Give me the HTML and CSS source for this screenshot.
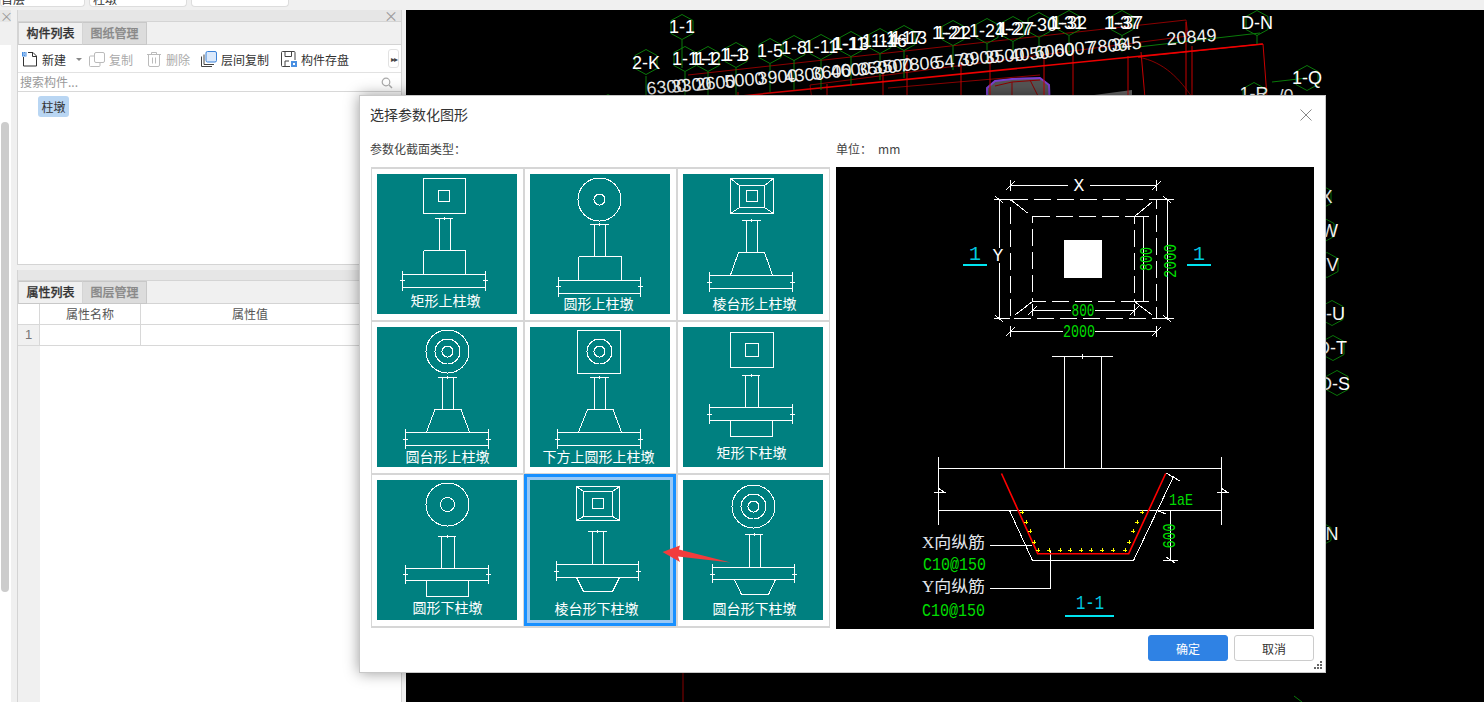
FILE: index.html
```html
<!DOCTYPE html>
<html lang="zh">
<head>
<meta charset="utf-8">
<title>选择参数化图形</title>
<link rel="stylesheet" href="styles.css">
</head>
<body>
<div class="topbar">
  <div class="pill pill-first"><span>首层</span></div>
  <div class="pill"><span>柱墩</span></div>
  <div class="pill"></div>
</div>
<div class="workspace">
  <aside class="side">
    <div class="mini">
      <div class="mini-head">×</div>
      <div class="mini-tabs"></div>
      <div class="mini-body"><div class="thumb"></div></div>
    </div>
    <div class="stack">
      <section class="panel panel-top">
        <div class="panel-head"><span class="x">×</span></div>
        <div class="tabs"><div class="tab on">构件列表</div><div class="tab">图纸管理</div></div>
        <div class="toolbar">
          <span class="tool tool-new">
            <svg class="ico" viewBox="0 0 16 16"><path d="M1.5 6v9h13V5L11 1.5H6" fill="none" stroke="#333"/><path d="M10.5 1.5V5.5H14.5" fill="none" stroke="#333"/><rect x="0" y="1" width="4.5" height="4.5" fill="#4a90e2"/><path d="M1 2h1M3 2h1M2 3h1M1 4h1M3 4h1" stroke="#cfe3fa"/></svg>
            <span>新建</span><i class="caret"></i>
          </span>
          <span class="tool off tool-copy">
            <svg class="ico" viewBox="0 0 16 16"><rect x="5.5" y="1.5" width="10" height="10" rx="1.5" fill="none" stroke="#bbb"/><path d="M5 5H1.5a1 1 0 0 0-1 1v8.5a1 1 0 0 0 1 1H10a1 1 0 0 0 1-1V12" fill="none" stroke="#bbb"/></svg>
            <span>复制</span>
          </span>
          <span class="tool off tool-del">
            <svg class="ico" viewBox="0 0 16 16"><path d="M1 3.500H15M5.500 3.500V1.500H10.500V3.500M2.500 3.500V14a1.500 1.500 0 0 0 1.500 1.500H12a1.500 1.500 0 0 0 1.500-1.500V3.500M6.500 6.500V12.500M9.500 6.500V12.500" fill="none" stroke="#bbb"/></svg>
            <span>删除</span>
          </span>
          <span class="tool tool-floor">
            <svg class="ico" viewBox="0 0 16 16"><path d="M3 3.500V13.500H13M.5 5.500V15.500H11" fill="none" stroke="#444"/><rect x="5" y=".5" width="10.500" height="10.500" rx="1.500" fill="#dbe9fb" stroke="#3b82d8"/></svg>
            <span>层间复制</span>
          </span>
          <span class="tool tool-save">
            <svg class="ico" viewBox="0 0 16 16"><path d="M9 15.500H1.500a1 1 0 0 1-1-1V1.500a1 1 0 0 1 1-1h11.500a1 1 0 0 1 1 1V9M4 .5V5.500H10.500V.5M4 15.500V10H8" fill="none" stroke="#444"/><rect x="10" y="10" width="6" height="6" fill="#4a90e2"/><rect x="12" y="12" width="2" height="2" fill="#fff"/></svg>
            <span>构件存盘</span>
          </span>
          <span class="more">▸▸</span>
        </div>
        <div class="search"><span>搜索构件...</span>
          <svg class="lens" viewBox="0 0 12 12"><circle cx="5" cy="5" r="3.800" fill="none" stroke="#aaa" stroke-width="1.200"/><path d="M8 8L11 11" stroke="#aaa" stroke-width="1.400"/></svg>
        </div>
        <div class="list"><span class="chip">柱墩</span></div>
      </section>
      <section class="panel panel-bottom">
        <div class="panel-head"></div>
        <div class="tabs"><div class="tab on">属性列表</div><div class="tab">图层管理</div></div>
        <div class="table">
          <div class="tr tr-head"><div class="td num head-num"></div><div class="td name">属性名称</div><div class="td val">属性值</div></div>
          <div class="tr"><div class="td num">1</div><div class="td name"></div><div class="td val"></div></div>
          <div class="tfill"><div class="fill-num"></div></div>
        </div>
      </section>
    </div>
  </aside>

  <main class="canvas">
    <svg class="cad-canvas" viewBox="406 10 1078 692">
      <defs><polygon id="h" points="0,-12.500 11,-6.500 11,6.500 0,12.500 -11,6.500 -11,-6.500"/></defs>
      <polygon class="g-fill" points="1079,97 1132,90 1132,110 1079,110"/>
      <polygon class="p-fill" points="987,88 995,81 1012,79 1040,78 1049,85 1050,110 987,110"/>
      <path class="r1" d="M888 88L1040 75M1030 80L1040 100M995 86L1012 82L1040 80M1012 82V100M688 75L1186 20L1188 36L810 85M810 85L812 100M1138 57C1165 62 1180 80 1192 97"/>
      <path class="r2" d="M738 92V110M827 84V110M883 72V110M907 55V110M961 62V110M990 60V110M1044 56V110M1073 52V110M1128 56V110M1141 52L1146 110M1186 22V110M1192 46V110M1263 44L1268 110M1138 57L1262 44"/>
      <path class="r3" d="M690 101L1263 44"/>
      <path class="gl" d="M1138 47L1260 33M1257 35V44M682 40V68M685 72V100M708 72V100M736 68V96M770 64V92M794 60V90M821 60V90M851 56V86M880 54V80M904 50V78M953 46V70M987 44V64M1013 42V60M1039 38V58M1069 36V56M1122 36V52M1307 78L1272 82M646 76V100M1294 696L1302 702"/>
      <path class="r1" d="M683 672V702"/>
      <g class="hexes">
        <use href="#h" x="682" y="27"/><use href="#h" x="646" y="62"/><use href="#h" x="685" y="59"/><use href="#h" x="708" y="59"/><use href="#h" x="736" y="55"/><use href="#h" x="770" y="51"/><use href="#h" x="794" y="48"/><use href="#h" x="821" y="47"/><use href="#h" x="851" y="44"/><use href="#h" x="880" y="41"/><use href="#h" x="904" y="38"/><use href="#h" x="953" y="33"/><use href="#h" x="987" y="31"/><use href="#h" x="1013" y="29"/><use href="#h" x="1039" y="25"/><use href="#h" x="1069" y="23"/><use href="#h" x="1122" y="23"/><use href="#h" x="1257" y="23"/><use href="#h" x="1307" y="78"/><use href="#h" x="1254" y="95"/><use href="#h" x="608" y="107"/>
        <use href="#h" x="1320" y="197"/><use href="#h" x="1323" y="230"/><use href="#h" x="1327" y="265"/><use href="#h" x="1332" y="313"/><use href="#h" x="1333" y="348"/><use href="#h" x="1337" y="383"/><use href="#h" x="1320" y="534"/>
      </g>
      <g class="lb">
        <text x="682" y="33">1-1</text><text x="646" y="69">2-K</text><text x="685" y="65">1-1</text><text x="708" y="65">1-2</text><text x="704" y="65">1-1</text><text x="736" y="61">1-3</text><text x="733" y="61">1-1</text><text x="770" y="57">1-5</text><text x="794" y="54">1-8</text><text x="821" y="53">1-11</text><text x="851" y="50">1-13</text><text x="849" y="50">1-11</text><text x="880" y="47">1-14</text><text x="889" y="47">1-16</text><text x="904" y="44">1-17</text><text x="909" y="44">1-13</text><text x="953" y="39">1-22</text><text x="950" y="39">1-21</text><text x="987" y="37">1-24</text><text x="1013" y="35">1-27</text><text x="1016" y="35">1-27</text><text x="1044" y="31">-30</text><text x="1069" y="29">1-32</text><text x="1066" y="29">1-31</text><text x="1122" y="29">1-37</text><text x="1125" y="29">1-37</text><text x="1257" y="29">D-N</text><text x="1307" y="84">1-Q</text><text x="1254" y="100">1-R</text><text x="1286" y="102">/0</text>
        <text x="1317" y="203">D-X</text><text x="1320" y="237">D-W</text><text x="1323" y="271">D-V</text><text x="1329" y="320">D-U</text><text x="1332" y="354">D-T</text><text x="1334.500" y="390">D-S</text><text x="1332" y="540">N</text>
      </g>
      <g class="lb nums">
        <text x="667" y="93" transform="rotate(-5 667 93)">6300</text><text x="692" y="91" transform="rotate(-5 692 91)">3300</text><text x="716" y="89" transform="rotate(-5 716 89)">2600</text><text x="745" y="86" transform="rotate(-5 745 86)">5000</text><text x="778" y="83" transform="rotate(-5 778 83)">3900</text><text x="805" y="81" transform="rotate(-5 805 81)">4300</text><text x="832" y="78" transform="rotate(-5 832 78)">3600</text><text x="851" y="76" transform="rotate(-5 851 76)">4600</text><text x="878" y="74" transform="rotate(-5 878 74)">3500</text><text x="893" y="72" transform="rotate(-5 893 72)">3500</text><text x="920" y="70" transform="rotate(-5 920 70)">7806</text><text x="955" y="67" transform="rotate(-5 955 67)">5470</text><text x="980" y="64" transform="rotate(-5 980 64)">3900</text><text x="1005" y="62" transform="rotate(-5 1005 62)">3500</text><text x="1030" y="60" transform="rotate(-5 1030 60)">4050</text><text x="1055" y="57" transform="rotate(-5 1055 57)">6000</text><text x="1075" y="55" transform="rotate(-5 1075 55)">6007</text><text x="1108" y="52" transform="rotate(-5 1108 52)">7806</text><text x="1127" y="50" transform="rotate(-5 1127 50)">345</text><text x="1192" y="43" transform="rotate(-5 1192 43)">20849</text>
      </g>
    </svg>
  </main>
</div>

<div class="dialog">
  <header class="dlg-title"><span>选择参数化图形</span>
    <svg class="close" viewBox="0 0 12 12"><path d="M.5 .5L11.500 11.500M11.500 .5L.5 11.500" stroke="#888" fill="none"/></svg>
  </header>
  <div class="dlg-labels"><span class="lab-left">参数化截面类型&#xFF1A;</span><span class="lab-right">单位&#xFF1A;<em>mm</em></span></div>
  <div class="dlg-body">
    <div class="grid">
      <div class="cell"><svg class="tile" viewBox="0 0 140 140"><path class="ln" d="M46.500 4.500H88.500V39.500H46.500ZM61.500 16.500H72.500V27.500H61.500ZM58 44.500H76M62.500 44.500V76.500M73.500 44.500V76.500M67.500 43V46M46.500 76.500H88.500V100.500M46.500 76.500V100.500M25.500 100.500H108.500M25.500 113.500H108.500M25.500 97V117M108.500 97V117M23 106.500H28M106 106.500H111"/><text class="cap" x="68.500" y="132">矩形上柱墩</text></svg></div>
      <div class="cell"><svg class="tile" viewBox="0 0 140 140"><circle class="ln" cx="69.500" cy="25.500" r="21.500"/><circle class="ln" cx="69.500" cy="25.500" r="5.500"/><path class="ln" d="M60 50.500H79M64.500 50.500V82.500M75.500 50.500V82.500M69.500 49V52M48.500 82.500H91.500V106.500M48.500 82.500V106.500M28.500 106.500H110.500M28.500 119.500H110.500M28.500 103V123M110.500 103V123M26 112.500H31M108 112.500H113"/><text class="cap" x="68.500" y="134.500">圆形上柱墩</text></svg></div>
      <div class="cell"><svg class="tile" viewBox="0 0 140 140"><path class="ln" d="M47.500 4.500H90.500V39.500H47.500ZM56.500 11.500H81.500V33.500H56.500ZM63.500 16.500H74.500V27.500H63.500ZM47.500 4.500L56.500 11.500M90.500 4.500L81.500 11.500M47.500 39.500L56.500 33.500M90.500 39.500L81.500 33.500M59 46.500H78M63.500 46.500V78.500M74.500 46.500V78.500M68.500 45V48M55.500 78.500H81.500L89.500 101M55.500 78.500L47.500 101M26.500 101.500H109.500M26.500 114.500H109.500M26.500 98V118M109.500 98V118M24 108.500H29M107 108.500H112"/><text class="cap" x="71.500" y="135">棱台形上柱墩</text></svg></div>
      <div class="cell"><svg class="tile" viewBox="0 0 140 140"><circle class="ln" cx="70.500" cy="24.500" r="21.500"/><circle class="ln" cx="70.500" cy="24.500" r="12.500"/><circle class="ln" cx="70.500" cy="24.500" r="5.500"/><path class="ln" d="M61 50.500H80M65.500 50.500V82.500M76.500 50.500V82.500M70.500 49V52M58 82.500H84L92.500 105M58 82.500L49.500 105M28.500 105.500H111.500M28.500 118.500H111.500M28.500 102V122M111.500 102V122M26 112.500H31M109 112.500H114"/><text class="cap" x="70.500" y="135">圆台形上柱墩</text></svg></div>
      <div class="cell"><svg class="tile" viewBox="0 0 140 140"><path class="ln" d="M47.500 3.500H90.500V46.500H47.500ZM60 50.500H79M64.500 50.500V82.500M75.500 50.500V82.500M69.500 49V52M57.500 82.500H83L91.500 105M57.500 82.500L48.500 105M27.500 105.500H110.500M27.500 118.500H110.500M27.500 102V122M110.500 102V122M25 112.500H30M108 112.500H113"/><circle class="ln" cx="69.500" cy="24.500" r="12.500"/><circle class="ln" cx="69.500" cy="24.500" r="5.500"/><text class="cap" x="68.500" y="135">下方上圆形上柱墩</text></svg></div>
      <div class="cell"><svg class="tile" viewBox="0 0 140 140"><path class="ln" d="M47.500 5.500H90.500V40.500H47.500ZM62.500 16.500H75.500V29.500H62.500ZM59 48.500H77M62.500 48.500V80.500M75.500 48.500V80.500M68.500 47V50M26.500 80.500H109.500M26.500 93.500H109.500M26.500 77V97M109.500 77V97M24 87.500H29M107 87.500H112M47.500 93.500V109.500H89.500V93.500"/><text class="cap" x="68.500" y="131">矩形下柱墩</text></svg></div>
      <div class="cell"><svg class="tile" viewBox="0 0 140 140"><circle class="ln" cx="70.500" cy="24.500" r="21.500"/><circle class="ln" cx="70.500" cy="24.500" r="7"/><path class="ln" d="M61 56.500H79M64.500 56.500V88.500M77.500 56.500V88.500M70.500 55V58M28.500 88.500H111.500M28.500 100.500H111.500M28.500 85V104M111.500 85V104M26 94.500H31M109 94.500H114M49.500 100.500V116.500H91.500V100.500"/><text class="cap" x="70.500" y="133">圆形下柱墩</text></svg></div>
      <div class="cell"><svg class="tile sel" viewBox="0 0 140 140"><path class="ln" d="M46.500 6.500H89.500V40.500H46.500ZM53.500 11.500H82.500V36.500H53.500ZM62.500 18.500H73.500V28.500H62.500ZM46.500 6.500L53.500 11.500M89.500 6.500L82.500 11.500M46.500 40.500L53.500 36.500M89.500 40.500L82.500 36.500M58 51.500H77M62.500 51.500V84.500M73.500 51.500V84.500M67.500 50V53M26.500 84.500H108.500M26.500 97.500H108.500M26.500 81V101M108.500 81V101M24 91.500H29M106 91.500H111M46.500 97.500L53.500 111.500H82.500L89.500 97.500"/><text class="cap" x="66.500" y="133.500">棱台形下柱墩</text></svg></div>
      <div class="cell"><svg class="tile" viewBox="0 0 140 140"><circle class="ln" cx="70.500" cy="26.500" r="21.500"/><circle class="ln" cx="70.500" cy="26.500" r="12.500"/><circle class="ln" cx="70.500" cy="26.500" r="5.500"/><path class="ln" d="M62 54.500H80M66.500 54.500V87.500M77.500 54.500V87.500M71.500 53V56M29.500 87.500H111.500M29.500 99.500H111.500M29.500 84V103M111.500 84V103M27 94.500H32M109 94.500H114M51.500 99.500L58.500 114.500H85.500L92.500 99.500"/><text class="cap" x="71.500" y="134">圆台形下柱墩</text></svg></div>
    </div>
    <svg class="preview" viewBox="836 167 478 462">
      <g class="wl">
        <path d="M1010.500 185.500H1068M1090 185.500H1156.500M1010.500 180V191M1156.500 180V191M1006 190L1015 181M1152 190L1161 181"/>
        <rect class="dash" x="1010.500" y="199.500" width="146" height="119"/>
        <rect class="dash" x="1032.500" y="216.500" width="102" height="85"/>
        <path d="M1010.500 199.500L1027.500 213M1134.500 216.500L1152 202M1032.500 301.500L1015 315M1134.500 301.500L1152 315"/>
        <path d="M999.500 199.500V248M999.500 263V318.500M994 199.500H1010M994 318.500H1010M995 196L1003 203M995 315L1003 322"/>
        <path d="M1143.500 216.500V301.500M1134 216.500H1149M1134 301.500H1149"/>
        <path d="M1167.500 199.500V318.500M1157 199.500H1174M1157 318.500H1174M1163 196L1171 203M1163 315L1171 322"/>
        <path d="M1032.500 310.500H1071M1095 310.500H1134.500M1032.500 304V316M1134.500 304V316M1028 315L1037 306M1130 315L1139 306"/>
        <path d="M1010.500 331.500H1063M1095 331.500H1156.500M1010.500 326V337M1156.500 326V337M1006 336L1015 327M1152 336L1161 327"/>
        <path d="M1052 356.500H1113M1064.500 356.500V468.500M1101.500 356.500V468.500M1082 354V359"/>
        <path d="M938.500 457V525M1221.500 457V525M938.500 468.500H1221.500M938.500 510.500H1221.500M934 492H944L938 488M1217 492H1227L1221 488"/>
        <path d="M1009.500 510.500L1032.500 560.500H1133.500L1173.500 476.500M1166 473L1180 481"/>
        <path d="M1156 510L1166 514M1170.500 510.500V560.500M1163 510.500H1178M1163 560.500H1178M1166 557L1175 563"/>
        <path d="M990 545.500H1032M990 588.500H1050.500V550"/>
      </g>
      <rect x="1064" y="240" width="38" height="38" fill="#fff"/>
      <path class="rebar" d="M1001.500 473.500L1037.700 553.700H1128.700L1165.700 473.500"/>
      <path class="plus" d="M1036.300 550h4M1038.300 548v4M1047.300 550h4M1049.300 548v4M1058.300 550h4M1060.300 548v4M1068.300 550h4M1070.300 548v4M1079.300 550h4M1081.300 548v4M1089.300 550h4M1091.300 548v4M1100.300 550h4M1102.300 548v4M1111.300 550h4M1113.300 548v4M1123.300 550h4M1125.300 548v4M1020.300 512h4M1022.300 510v4M1024.300 522h4M1026.300 520v4M1028.300 531h4M1030.300 529v4M1032.300 542h4M1034.300 540v4M1140.300 512h4M1142.300 510v4M1135.300 522h4M1137.300 520v4M1131.300 531h4M1133.300 529v4M1127.300 542h4M1129.300 540v4"/>
      <rect class="cy-bar" x="963" y="264" width="24" height="2"/>
      <rect class="cy-bar" x="1187" y="264" width="24" height="2"/>
      <rect class="cy-bar" x="1065" y="615" width="49" height="2"/>
      <text class="cad cy" x="975" y="260" text-anchor="middle">1</text>
      <text class="cad cy" x="1199" y="260" text-anchor="middle">1</text>
      <text class="cad cy" x="1090" y="609" text-anchor="middle" textLength="28" lengthAdjust="spacingAndGlyphs">1-1</text>
      <text class="cad wt" x="1079" y="191" text-anchor="middle">X</text>
      <text class="cad wt" x="998" y="261" text-anchor="middle">Y</text>
      <text class="cad gr" x="1083" y="316" text-anchor="middle" textLength="23" lengthAdjust="spacingAndGlyphs">800</text>
      <text class="cad gr" x="1079" y="337" text-anchor="middle" textLength="32" lengthAdjust="spacingAndGlyphs">2000</text>
      <text class="cad gr" transform="rotate(-90 1152 259)" x="1152" y="259" text-anchor="middle" textLength="24" lengthAdjust="spacingAndGlyphs">800</text>
      <text class="cad gr" transform="rotate(-90 1176 261)" x="1176" y="261" text-anchor="middle" textLength="34" lengthAdjust="spacingAndGlyphs">2000</text>
      <text class="cad gr" transform="rotate(-90 1175 536)" x="1175" y="536" text-anchor="middle" textLength="25" lengthAdjust="spacingAndGlyphs">600</text>
      <text class="cad gr gr-small" x="1169" y="505" textLength="24" lengthAdjust="spacingAndGlyphs">1aE</text>
      <text class="cjk" x="922" y="548" textLength="63" lengthAdjust="spacingAndGlyphs">X向纵筋</text>
      <text class="cad gr" x="923" y="570" textLength="63" lengthAdjust="spacingAndGlyphs">C10@150</text>
      <text class="cjk" x="922" y="592" textLength="63" lengthAdjust="spacingAndGlyphs">Y向纵筋</text>
      <text class="cad gr" x="922" y="616" textLength="63" lengthAdjust="spacingAndGlyphs">C10@150</text>
    </svg>
  </div>
  <footer class="dlg-foot"><button class="btn primary">确定</button><button class="btn">取消</button></footer>
  <svg class="grip" viewBox="0 0 8 8"><path d="M6 0h2v2H6zM3 3h2v2H3zM6 3h2v2H6zM0 6h2v2H0zM3 6h2v2H3zM6 6h2v2H6z" fill="#666"/></svg>
  <svg class="arrow" viewBox="0 0 72 22"><polygon points="2.500,9 20,2.500 19,6.500 70.500,19.500 18,13.500 20,19"/></svg>
</div>
</body>
</html>
```
FILE: styles.css
```css
* { box-sizing: border-box; }
html, body { margin: 0; height: 100%; }
body {
  width: 1484px;
  height: 702px;
  overflow: hidden;
  position: relative;
  display: flex;
  flex-direction: column;
  background: #f0f0f0;
  color: #333;
  font: 12px/1.2 "Noto Sans CJK SC", "Liberation Sans", sans-serif;
}

/* top strip */
.topbar { height: 10px; flex: none; display: flex; gap: 4px; background: #f0f0f0; padding-bottom: 3px; }
.pill {
  width: 98px;
  height: 7px;
  background: #fff;
  border: 1px solid #ddd;
  border-top: 0;
  border-radius: 0 0 4px 4px;
  overflow: hidden;
  display: flex;
  align-items: flex-end;
  padding-left: 3px;
  line-height: 14px;
}
.pill-first { width: 85px; padding-left: 0; }

.workspace { flex: 1; min-height: 0; display: flex; }

/* left side */
.side { width: 406px; flex: none; display: flex; background: #f0f0f0; }
.mini { width: 11px; flex: none; display: flex; flex-direction: column; }
.mini-head { height: 12px; background: #e6e6e6; color: #999; font-size: 13px; line-height: 12px; text-align: center; }
.mini-tabs { height: 23px; background: #f0f0f0; }
.mini-body { flex: 1; background: #fff; padding: 77px 2px 110px 1px; }
.thumb { height: 100%; background: #ccc; border-radius: 4px; }

.stack { width: 395px; padding: 0 4px 0 6px; display: flex; flex-direction: column; gap: 5px; }
.panel {
  border: 1px solid #d4d4d4;
  border-top: 0;
  display: flex;
  flex-direction: column;
  background: #fff;
}
.panel-top { height: 255px; flex: none; }
.panel-bottom { flex: 1; border-bottom: 0; min-height: 0; }
.panel-head {
  height: 12px;
  flex: none;
  background: #e6e6e6;
  border-bottom: 1px solid #d4d4d4;
  text-align: right;
  padding-right: 3px;
}
.panel-bottom .panel-head { height: 11px; }
.x { color: #999; font-size: 14px; line-height: 11px; display: block; }

.tabs { height: 23px; flex: none; display: flex; background: #f0f0f0; border-bottom: 1px solid #d4d4d4; }
.tab {
  width: 65px;
  height: 23px;
  flex: none;
  border: 1px solid #c8c8c8;
  border-left-color: #d4d4d4;
  background: #dcdcdc;
  color: #888;
  font-weight: 500;
  text-align: center;
  line-height: 19px;
  -webkit-text-stroke: .25px currentColor;
}
.tab + .tab { margin-left: -1px; }
.tab.on { background: #f0f0f0; color: #333; }

.toolbar {
  height: 28px;
  flex: none;
  display: flex;
  align-items: center;
  border-bottom: 1px solid #e2e2e2;
  padding: 1px 0 0 4px;
  position: relative;
}
.tool { display: flex; align-items: center; gap: 4px; color: #333; white-space: nowrap; }
.tool > span { position: relative; top: 1px; }
.tool.off { color: #aaa; }
.ico { width: 16px; height: 16px; flex: none; }
.caret { width: 0; height: 0; border: 3px solid transparent; border-top: 3px solid #888; border-bottom: 0; margin-left: 6px; }
.tool-new { width: 67px; }
.tool-copy { width: 57px; }
.tool-del { width: 55px; }
.tool-floor { width: 80px; }
.more {
  position: absolute;
  right: 2px;
  top: 4px;
  width: 11px;
  height: 19px;
  border: 1px solid #e2e2e2;
  border-radius: 3px;
  font-size: 8px;
  line-height: 17px;
  text-align: center;
  letter-spacing: -1px;
  color: #444;
}

.search {
  height: 19px;
  flex: none;
  display: flex;
  align-items: center;
  justify-content: space-between;
  padding: 1px 8px 0 2px;
  border-bottom: 1px solid #d8d8d8;
  color: #999;
}
.lens { width: 12px; height: 12px; }
.list { flex: 1; padding: 4px 0 0 20px; }
.chip { display: inline-block; width: 31px; height: 21px; line-height: 21px; background: #b9d6f3; border-radius: 3px; text-align: center; }

.table { flex: 1; display: flex; flex-direction: column; min-height: 0; }
.tr { display: flex; height: 21px; flex: none; border-bottom: 1px solid #d8d8d8; color: #555; }
.td { line-height: 20px; text-align: center; border-right: 1px solid #d8d8d8; }
.num { width: 22px; background: #f0f0f0; color: #777; font: 13px/20px "Liberation Sans", sans-serif; }
.head-num { background: #fff; }
.name { width: 101px; }
.val { flex: 1; border-right: 0; padding-right: 42px; }
.tfill { flex: 1; display: flex; }
.fill-num { width: 22px; background: #f0f0f0; }

/* CAD canvas */
.canvas { flex: 1; background: #000; min-width: 0; overflow: hidden; }
.cad-canvas { display: block; width: 1078px; height: 692px; }
.hexes use { fill: none; stroke: #0a7a0a; stroke-width: 1; }
.gl { fill: none; stroke: #0a7a0a; stroke-width: 1; }
.r1 { fill: none; stroke: #8b0000; stroke-width: 1; }
.r2 { fill: none; stroke: #c80000; stroke-width: 1; }
.r3 { fill: none; stroke: #ee0000; stroke-width: 1.500; }
.p-fill { fill: #555; stroke: #7a3fd0; stroke-width: 2; }
.g-fill { fill: #666; }
.lb text { fill: #fff; font: 18px "Liberation Sans", sans-serif; text-anchor: middle; }
.nums text { fill: #f0f0f0; }

/* dialog */
.dialog {
  position: absolute;
  left: 359px;
  top: 95px;
  width: 967px;
  height: 578px;
  background: #fff;
  border: 1px solid #c8c8c8;
  box-shadow: 0 0 14px rgba(0, 0, 0, .4);
  padding: 0 11px;
  display: flex;
  flex-direction: column;
}
.dlg-title {
  height: 39px;
  flex: none;
  margin-left: -1px;
  padding-bottom: 2px;
  display: flex;
  align-items: center;
  justify-content: space-between;
  font-size: 14px;
  color: #333;
}
.close { width: 12px; height: 12px; margin: 0 2px 0 0; }
.dlg-labels { height: 32px; flex: none; display: flex; padding-bottom: 3px; align-items: center; font-size: 12px; color: #444; }
.lab-left { width: 466px; margin-left: -1px; }
.lab-right em { font-style: normal; margin-left: 6px; }

.dlg-body { height: 462px; flex: none; display: flex; gap: 6px; align-items: flex-start; }
.grid {
  width: 459px;
  height: 461px;
  flex: none;
  background: #d6d6d6;
  padding: 2px 1px;
  display: grid;
  grid-template-columns: repeat(3, 151px);
  grid-template-rows: repeat(3, 151px);
  gap: 2px;
}
.cell { background: #fff; padding: 5px; }
.tile { display: block; width: 140px; height: 140px; background: #008080; }
.tile.sel { box-shadow: 0 0 0 3px #99c8f5, 0 0 0 6px #1890ff; }
.ln { fill: none; stroke: #fff; stroke-width: 1; shape-rendering: crispEdges; }
.cap { fill: #fff; font: 14px "Noto Sans CJK SC", sans-serif; text-anchor: middle; }

.preview { display: block; width: 478px; height: 462px; background: #000; flex: none; }
.wl path { fill: none; stroke: #fff; stroke-width: 1; shape-rendering: crispEdges; }
.dash { fill: none; stroke: #fff; stroke-width: 1; stroke-dasharray: 17 6; shape-rendering: crispEdges; }
.rebar { fill: none; stroke: #f00; stroke-width: 1.600; }
.plus { fill: none; stroke: #ff0; stroke-width: 1; shape-rendering: crispEdges; }
.cy-bar { fill: #00e5f0; }
.cad { font: 19px "Liberation Mono", monospace; }
.cy { fill: #00c8e0; font-size: 20px; }
.wt { fill: #fff; font-size: 18px; }
.gr { fill: #00dc00; }
.gr-small { font-size: 17px; }
.cjk { fill: #e4e8ee; font: 16px "Liberation Serif", "Noto Sans CJK SC", serif; }

.dlg-foot { height: 43px; flex: none; display: flex; justify-content: flex-end; gap: 6px; padding-top: 6px; }
.btn {
  width: 80px;
  height: 26px;
  padding: 0;
  background: #fff;
  border: 1px solid #ccc;
  border-radius: 3px;
  color: #333;
  font: 12px "Noto Sans CJK SC", sans-serif;
}
.primary { background: #2f82e4; border-color: #2f82e4; color: #fff; }
.grip { position: absolute; right: 3px; bottom: 3px; width: 8px; height: 8px; }
.arrow { position: absolute; left: 300px; top: 447px; width: 72px; height: 22px; fill: #f23c3c; }
```
